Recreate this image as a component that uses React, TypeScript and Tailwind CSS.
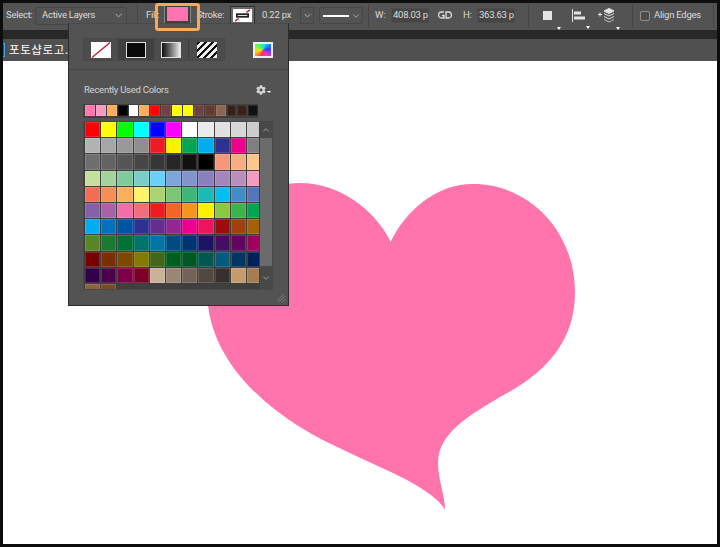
import React from "react";
import { ChevronDown, ChevronUp } from "lucide-react";
import { FaCog } from "react-icons/fa";

const recents = ["#ff77b1","#f49bc1","#fbad5f","#000000","#ffffff","#fbad5f","#ff0000","#6e4244","#ffff00","#ffff00","#6e4244","#653a2d","#8c6652","#362017","#38211a","#111111"];
const swatches = [
"#ff0000","#ffff00","#00ff00","#00ffff","#0000ff","#ff00ff","#ffffff","#ebebeb","#e1e1e1","#d7d7d7","#cccccc",
"#b2b2b2","#a6a6a6","#999999","#8f8f8f","#ed1c24","#fff200","#00a651","#00aeef","#2e3192","#ec008c","#808080",
"#6e6e6e","#636363","#555555","#464646","#363636","#262626","#111111","#000000","#f7977a","#fbad82","#fdc68c",
"#c6df9c","#a4d49d","#81ca9d","#7bcdc9","#6ccff7","#7ca6d8","#8293ca","#8881be","#a286bd","#bc8dbf","#f49bc1",
"#f26d55","#f68e55","#fbaf5a","#fff467","#acd372","#7cc576","#3bb878","#1abbb4","#00bff3","#438ccb","#5574b9",
"#8560a8","#a763a9","#f06eaa","#f26d7d","#ed1c24","#f26522","#f7941d","#fff200","#8dc63f","#39b54a","#00a651",
"#00aeef","#0072bc","#0054a6","#2e3192","#662d91","#92278f","#ec008c","#ed145b","#9e0b0f","#a0410d","#a36209",
"#598527","#1a7b30","#007236","#00746b","#0076a3","#004b80","#003471","#1b1464","#440e62","#630460","#9e005d",
"#790000","#7b2e00","#7d4900","#827b00","#406618","#005e20","#005825","#005951","#005b7f","#003663","#002157",
"#32004b","#4b0049","#7b0046","#7a0026","#c7b299","#998675","#736357","#534741","#362f2d","#c69c6d","#a67c52",
"#8c6239","#754c24"];

const Sep = ({ className }: { className: string }) => <div className={`w-px h-[24px] bg-[#444444] shrink-0 ${className}`} />;

const Corner = () => <span className="absolute -right-[3px] -bottom-[3px] w-0 h-0 border-t-[3px] border-b-0 border-x-[2px] border-t-white border-x-transparent" />;

function FillTypeBox({ children, active }: { children: React.ReactNode; active?: boolean }) {
  return (
    <div className={`w-[35px] h-full flex items-center justify-center border-r border-[#3d3d3d] last:border-r-0 ${active ? "bg-[#404040]" : "bg-[#4c4c4c]"}`}>
      {children}
    </div>
  );
}

export default function App() {
  return (
    <div className="relative w-[720px] h-[547px] overflow-hidden bg-[#0d0d0d] p-[3px] flex flex-col font-['Roboto',sans-serif] text-[9.5px] tracking-[-0.25px] text-[#dcdcdc]">
      {/* options bar */}
      <div className="h-[27px] bg-[#535353] flex items-center shrink-0 pl-[3px] pb-[2px]">
        <span className="w-[29px] shrink-0">Select:</span>
        <div className="w-[92px] h-[18px] shrink-0 border border-[#464646] rounded-[2px] flex items-center justify-between pl-[6px] pr-[2px]">
          <span>Active Layers</span>
          <ChevronDown size={11} strokeWidth={1.5} />
        </div>
        <Sep className="ml-[10px]" />
        <span className="ml-[8px] w-[18px] shrink-0">Fill:</span>
        <div className="w-[27px] h-[20px] shrink-0 border border-[#8a8a8a] bg-[#3f3f3f] p-[2px] flex -mt-[3px]">
          <div className="flex-1 bg-[#ff73b0]" />
        </div>
        <span className="w-[32px] ml-[1px] shrink-0 text-right">Stroke:</span>
        <div className="ml-[6px] w-[25px] h-[19px] shrink-0 border border-[#2e2e2e] bg-[#6a6a6a] p-[2px] flex">
          <svg viewBox="0 0 21 15" className="flex-1 bg-white">
            <rect x="3" y="5" width="15" height="5" fill="#222" />
            <rect x="5" y="7" width="11" height="1" fill="#fff" />
            <path d="M2 14L6 11M15 4L19 1" stroke="#d4141c" strokeWidth="1.6" />
          </svg>
        </div>
        <div className="ml-[5px] w-[40px] h-[17px] shrink-0 flex items-center pl-[2px]">0.22 px</div>
        <div className="w-[14px] h-[17px] shrink-0 border border-[#464646] flex items-center justify-center">
          <ChevronDown size={11} strokeWidth={1.5} />
        </div>
        <div className="ml-[5px] w-[44px] h-[17px] shrink-0 border border-[#464646] rounded-[2px] flex items-center pl-[3px] gap-[2px]">
          <div className="w-[26px] h-[2px] bg-white" />
          <ChevronDown size={10} strokeWidth={1.5} />
        </div>
        <Sep className="ml-[5px]" />
        <span className="ml-[6px] w-[16px] shrink-0">W:</span>
        <div className="w-[38px] h-[15px] shrink-0 bg-[#464646] border border-[#4c4c4c] flex items-center pl-[1px] overflow-hidden whitespace-nowrap">408.03 px</div>
        <svg viewBox="0 0 14 8" className="ml-[9px] w-[14px] h-[8px] shrink-0 -mt-[2px]" fill="none" stroke="#dcdcdc" strokeWidth="1.3">
          <path d="M6 1H3.500a3 3 0 0 0 0 6H6V4.500H4" />
          <path d="M8 1h2.500a3 3 0 0 1 0 6H8z" />
        </svg>
        <span className="ml-[11px] w-[14px] shrink-0">H:</span>
        <div className="w-[38px] h-[15px] shrink-0 bg-[#464646] border border-[#4c4c4c] flex items-center pl-[1px] overflow-hidden whitespace-nowrap">363.63 px</div>
        <Sep className="ml-[13px]" />
        <div className="relative ml-[14px] w-[9px] h-[9px] bg-[#e4e4e4] shrink-0 -mt-[1px]"><span className="absolute -right-[6px] -bottom-[7px]"><Corner /></span></div>
        <div className="relative ml-[20px] w-[13px] h-[13px] shrink-0 -mt-[1px]">
          <svg viewBox="0 0 13 13" className="w-[13px] h-[13px]" fill="#e4e4e4">
            <rect x="0" y="0" width="1" height="13" />
            <rect x="2" y="2.500" width="7" height="3" />
            <rect x="2" y="7.500" width="11" height="3" />
          </svg>
          <span className="absolute -right-[2px] -bottom-[4px]"><Corner /></span>
        </div>
        <div className="relative ml-[13px] w-[17px] h-[16px] shrink-0">
          <svg viewBox="0 0 17 16" className="w-[17px] h-[16px]" fill="none" stroke="#e4e4e4">
            <path d="M0 6.500h4M2 4.500v4" />
            <path d="M11 .5l5 2.500-5 2.500-5-2.500z" fill="#e4e4e4" />
            <path d="M6 5.500l5 2.500 5-2.500" />
            <path d="M6 8.500l5 2.500 5-2.500" />
            <path d="M6 11.500l5 2.500 5-2.500" opacity=".7" />
          </svg>
          <span className="absolute -right-[2px] -bottom-[3px]"><Corner /></span>
        </div>
        <Sep className="ml-[17px]" />
        <div className="ml-[7px] w-[10px] h-[10px] shrink-0 border border-[#8e8e8e] rounded-[2px] bg-[#4c4c4c]" />
        <span className="ml-[4px] w-[48px] shrink-0 whitespace-nowrap">Align Edges</span>
        <Sep className="ml-[11px]" />
      </div>
      {/* dark strip */}
      <div className="h-[9px] bg-[#282828] shrink-0" />
      {/* tab bar */}
      <div className="h-[22px] bg-[#505050] shrink-0 flex items-center overflow-hidden">
        <div className="w-[1px] h-[12px] border border-l-0 border-[#35a8e6] shrink-0 box-content" />
        <span className="ml-[4px] text-[11.5px] text-white whitespace-nowrap font-['Noto_Sans_CJK_KR',sans-serif] tracking-[0.6px]">포토샵로고.psd</span>
      </div>
      {/* canvas */}
      <div className="flex-1 bg-white" />

      {/* heart: page coordinates */}
      <svg viewBox="0 0 720 547" className="absolute left-0 top-0 w-[720px] h-[547px]">
        <path
          fill="#ff74ad"
          d="M390.7 241.7C405 212 435 184 473 184C530 184 575 232 575 292C575 340 548 372 500 397C472 414 438 432 438 463C438 480 445 495 445 510C440 500 425 490 407 480C370 461 330 446 300 427C250 396 207 350 207 290C207 230 250 183 300 183C340 183 375 210 390.7 241.7Z"
        />
      </svg>

      {/* swatches popover */}
      <div className="absolute left-[68px] top-[23px] w-[221px] h-[283px] bg-[#535353] border border-[#2b2b2b] border-t-[#4a4a4a] pt-[14px] pl-[14px]">
        <div className="flex items-center h-[23px]">
          <div className="flex h-[23px] border border-[#484848]">
            <FillTypeBox>
              <svg viewBox="0 0 20 16" className="w-[20px] h-[16px] bg-white">
                <path d="M1 15.500L19 .5" stroke="#c8141c" strokeWidth="1.3" />
              </svg>
            </FillTypeBox>
            <FillTypeBox active>
              <div className="w-[20px] h-[16px] bg-[#0a0a0a] border border-[#e0e0e0]" />
            </FillTypeBox>
            <FillTypeBox>
              <div className="w-[20px] h-[16px] bg-gradient-to-r from-[#111111] to-[#eeeeee] border border-[#e0e0e0]" />
            </FillTypeBox>
            <FillTypeBox>
              <div className="w-[20px] h-[16px] bg-[repeating-linear-gradient(135deg,#111111_0,#111111_2.5px,#eeeeee_2.5px,#eeeeee_5px)]" />
            </FillTypeBox>
          </div>
          <div className="ml-[28px] w-[20px] h-[16px] border-2 border-[#eeeeee] bg-[conic-gradient(from_200deg,#ff3060,#ffe000,#40ff60,#20d0ff,#3040ff,#ff30c0,#ff3060)]" />
        </div>
        <div className="-ml-[14px] mt-[8px] w-[219px] h-px bg-[#474747]" />
        <div className="mt-[13px] h-[14px] flex items-center justify-between pr-[17px] pl-[1px] text-[#d4d4d4]">
          <span>Recently Used Colors</span>
          <span className="flex items-center gap-[1px]">
            <FaCog size={10} />
            <span className="w-0 h-0 border-t-[2px] border-x-[2px] border-t-white border-x-transparent mt-[4px]" />
          </span>
        </div>
        <div className="mt-[7px] w-[175px] h-[14px] bg-[#404040] px-[2px] py-[1px] flex gap-[1px]">
          {recents.map((c, i) => (
            <div key={i} style={{ backgroundColor: c }} className="w-[9.9px] h-[11px] shrink-0 border border-white/10" />
          ))}
        </div>
        <div className="mt-[3px] w-[190px] h-[169px] bg-[#3f3f3f] border border-[#484848] flex overflow-hidden">
          <div className="w-[175px] pl-[1px] h-full overflow-hidden">
            <div className="grid grid-cols-[repeat(11,15.2px)] auto-rows-[15.2px] gap-[1px]">
              {swatches.map((c, i) => (
                <div key={i} style={{ backgroundColor: c }} className="border border-white/15" />
              ))}
            </div>
          </div>
          <div className="ml-[1px] w-[12px] h-full flex flex-col bg-[#484848] text-[#c8c8c8]">
            <div className="h-[16px] flex items-center justify-center"><ChevronUp size={10} strokeWidth={1.5} /></div>
            <div className="flex-1 bg-[#6b6b6b]" />
            <div className="h-[23px] flex items-center justify-center"><ChevronDown size={10} strokeWidth={1.5} /></div>
          </div>
        </div>
        <svg viewBox="0 0 10 10" className="absolute right-[2px] bottom-[2px] w-[10px] h-[10px]" stroke="#777777" strokeWidth="1">
          <path d="M1 8L8 1M3 9L9 3M6 9.500L9.500 6" />
        </svg>
      </div>

      {/* orange highlight around the fill swatch */}
      <div className="absolute left-[155px] top-[3px] w-[45px] h-[28px] border-[3px] border-[#f6a957] rounded-[3px]" />
    </div>
  );
}
